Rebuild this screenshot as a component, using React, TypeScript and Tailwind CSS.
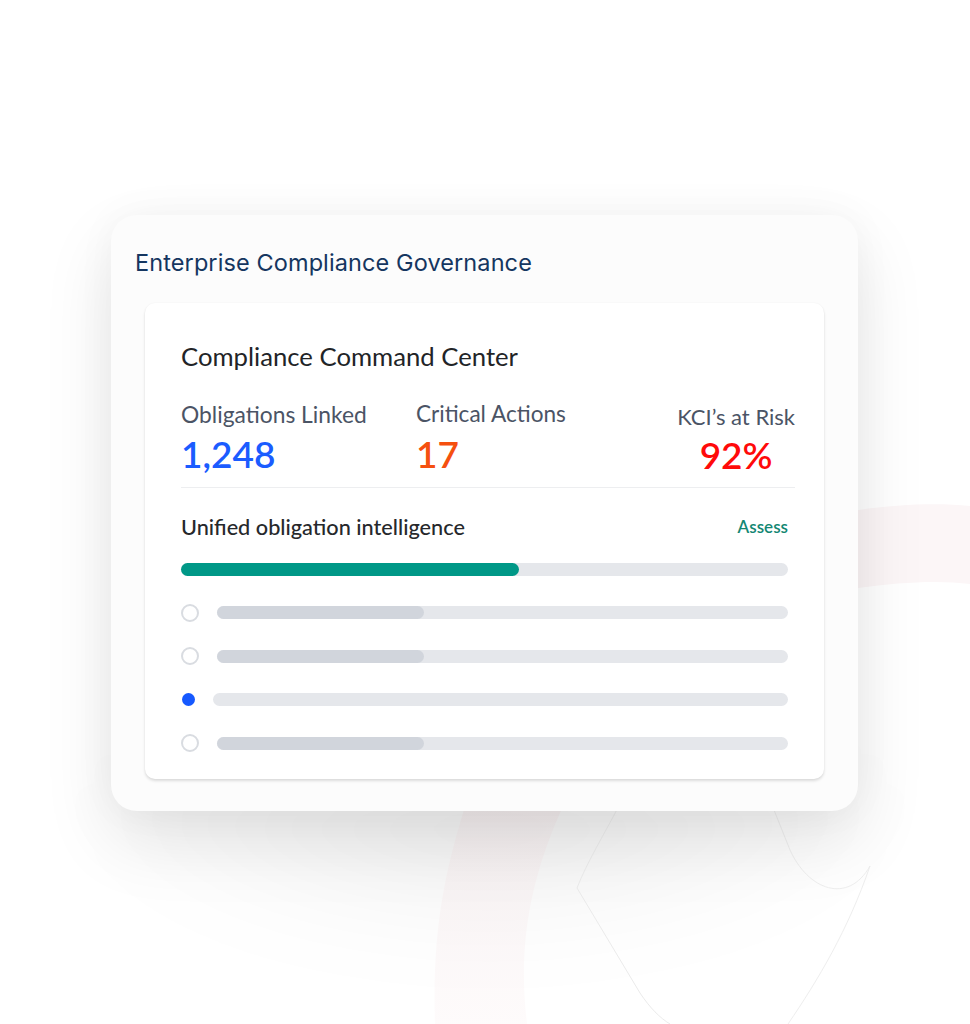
import React from 'react';

const rows = [
  { active: false, fill: 207 },
  { active: false, fill: 207 },
  { active: true, fill: 0 },
  { active: false, fill: 207 },
];

const Backdrop: React.FC = () => (
  <svg className="absolute inset-0 pointer-events-none" width="970" height="1024" viewBox="0 0 970 1024" fill="none">
    <defs>
      <linearGradient id="pinkFade" x1="0" y1="0" x2="0" y2="1">
        <stop offset="0" stopColor="#f1e4e6" stopOpacity="0.45" />
        <stop offset="1" stopColor="#fbf1f2" stopOpacity="0.3" />
      </linearGradient>
    </defs>
    <path d="M858 510 C 900 504, 940 503, 970 506 L 970 584 C 940 580, 900 582, 858 588 Z" fill="#fcf6f7" />
    <path d="M467 800 C 445 870, 432 930, 435 1024 L 527 1024 C 518 950, 528 880, 566 800 Z" fill="url(#pinkFade)" />
    <path d="M622 800 C 604 835, 587 862, 577 888 L 640 993 C 650 1008, 660 1018, 670 1024" stroke="#ebebeb" strokeWidth="1" />
    <path d="M768 795 L 790 850 C 808 890, 848 905, 870 866 C 848 930, 818 980, 788 1024" stroke="#eeeeee" strokeWidth="1" />
  </svg>
);

const App: React.FC = () => {
  return (
    <div className="relative w-[970px] h-[1024px] bg-white overflow-hidden">
      <div className="absolute left-[60px] top-[780px] w-[860px] h-[180px] rounded-[60px] bg-[radial-gradient(ellipse_at_50%_0%,rgba(0,0,0,0.08),transparent_70%)] blur-2xl"></div>
      <Backdrop />

      <div className="relative pt-[215px] pl-[111px]">
        <div className="w-[747px] rounded-[26px] bg-[#fcfcfc] px-[34px] pt-[32px] pb-[32px] shadow-[0_30px_70px_rgba(0,0,0,0.1),0_0_40px_rgba(0,0,0,0.04)]">
          <h1 className="-ml-[10px] text-[23.5px] leading-[32px] text-[#153660] font-['Inter',sans-serif] tracking-[0.1px]">
            Enterprise Compliance Governance
          </h1>

          <div className="mt-[24px] rounded-[10px] bg-white pl-[36px] pr-[29px] pt-[37px] pb-[29px] shadow-[0_2px_3px_rgba(0,0,0,0.13),0_0_2px_rgba(0,0,0,0.04)] font-['Lato','Noto_Sans',sans-serif]">
            <h2 className="text-[25.7px] leading-[32px] text-[#222427]">Compliance Command Center</h2>

            <div className="mt-[28px] flex">
              <div className="w-[235px]">
                <div className="text-[22.8px] leading-[28px] text-[#4b5465]">Obligations Linked</div>
                <div className="mt-[6px] text-[37px] leading-[40px] font-semibold text-[#1b5cff]">1,248</div>
              </div>
              <div className="flex-1">
                <div className="text-[22.6px] leading-[28px] text-[#4b5465]">Critical Actions</div>
                <div className="mt-[6px] text-[37px] leading-[40px] font-semibold text-[#f5500f]">17</div>
              </div>
              <div className="text-center pt-[3px]">
                <div className="text-[22px] leading-[28px] text-[#4b5465]">KCI’s at Risk</div>
                <div className="mt-[4px] text-[37px] leading-[40px] font-semibold text-[#ff0a0a]">92%</div>
              </div>
            </div>

            <div className="mt-[12px] h-px bg-[#edeef0]"></div>

            <div className="mt-[24px] flex items-center justify-between pr-[7px]">
              <span className="text-[21.7px] leading-[30px] font-medium text-[#26282b]">Unified obligation intelligence</span>
              <span className="text-[17px] leading-[24px] font-semibold text-[#138773]">Assess</span>
            </div>

            <div className="mt-[21px] mr-[7px] h-[13px] rounded-full bg-[#e5e7eb]">
              <div className="h-full w-[338px] rounded-full bg-[#009887]"></div>
            </div>

            <div className="mt-[30px] mr-[7px] flex flex-col gap-[30.5px]">
              {rows.map((r, i) => (
                <div key={i} className="flex items-center h-[13px]">
                  {r.active ? (
                    <span className="ml-[1px] mr-[18px] w-[13px] h-[13px] rounded-full bg-[#1659ff] shrink-0"></span>
                  ) : (
                    <span className="mr-[18px] w-[18px] h-[18px] rounded-full border-2 border-[#d9dce1] shrink-0"></span>
                  )}
                  <div className="flex-1 h-[13px] rounded-full bg-[#e5e7eb]">
                    {r.fill > 0 && <div className="h-full w-[207px] rounded-full bg-[#d1d5dc]"></div>}
                  </div>
                </div>
              ))}
            </div>
          </div>
        </div>
      </div>
    </div>
  );
};

export default App;
